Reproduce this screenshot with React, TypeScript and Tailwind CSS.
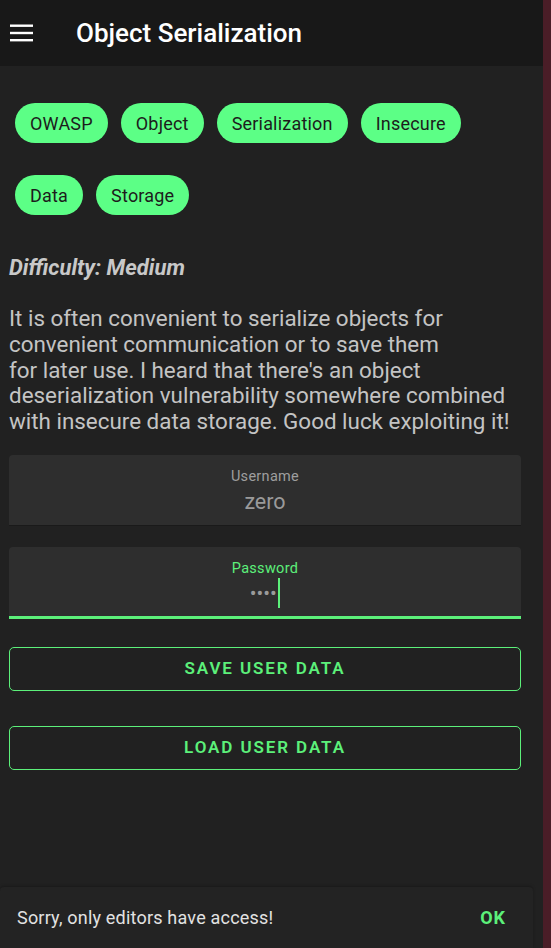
const tags = ["OWASP", "Object", "Serialization", "Insecure", "Data", "Storage"];

function MenuIcon() {
  return (
    <svg width="24" height="24" viewBox="0 0 24 24" className="fill-white">
      <rect x="0" y="3.5" width="23" height="2.4" />
      <rect x="0" y="10.8" width="23" height="2.4" />
      <rect x="0" y="18" width="23" height="2.4" />
    </svg>
  );
}

export default function App() {
  return (
    <div className="flex h-[948px] w-[551px] overflow-hidden font-['Roboto',sans-serif]">
      <div className="relative flex w-[543px] flex-col bg-[#212121]">
        <header className="flex h-[66px] shrink-0 items-center bg-[#181818] pl-[10px]">
          <MenuIcon />
          <h1 className="ml-[42px] text-[26px] font-medium text-white">Object Serialization</h1>
        </header>

        <main className="flex flex-col px-[9px]">
          <div className="mt-[37px] flex w-[512px] flex-wrap gap-x-[13px] gap-y-[32px] pl-[6px]">
            {tags.map((t) => (
              <span
                key={t}
                className="flex h-[40px] items-center rounded-full bg-[#5cff86] px-[15px] text-[18px] tracking-[0.2px] text-[#1c1c1c]"
              >
                {t}
              </span>
            ))}
          </div>

          <p className="mt-[38px] text-[22px] leading-[30px] font-bold italic text-[#c8c8c8]">Difficulty: Medium</p>

          <p className="mt-[23px] text-[22.4px] leading-[25.8px] text-[#c4c4c4]">
            It is often convenient to serialize objects for
            <br />
            convenient communication or to save them
            <br />
            for later use. I heard that there's an object
            <br />
            deserialization vulnerability somewhere combined
            <br />
            with insecure data storage. Good luck exploiting it!
          </p>

          <div className="mt-[20px] flex h-[71px] w-[512px] flex-col items-center rounded-t-[4px] border-b border-[#1a1a1a] bg-[#2e2e2e] pt-[13px]">
            <span className="text-[14.5px] leading-[18px] tracking-[0.3px] text-[#9e9e9e]">Username</span>
            <span className="mt-[2px] text-[21.5px] leading-[28px] text-[#9a9a9a]">zero</span>
          </div>

          <div className="mt-[21px] flex h-[72px] w-[512px] flex-col items-center rounded-t-[4px] border-b-[3px] border-[#5cf07a] bg-[#2e2e2e] pt-[13px]">
            <span className="text-[14.5px] leading-[18px] tracking-[0.3px] text-[#5cf07a]">Password</span>
            <span className="mt-[0px] flex h-[30px] items-center">
              <span className="text-[20px] tracking-[0px] text-[#9a9a9a]">••••</span>
              <span className="ml-[1px] h-[30px] w-[2.5px] bg-[#5cf07a]" />
            </span>
          </div>

          <button className="mt-[28px] h-[44px] w-[512px] rounded-[5px] border border-[#5cf07a] text-[17px] font-semibold tracking-[1.9px] text-[#5cf07a]">
            SAVE USER DATA
          </button>
          <button className="mt-[35px] h-[44px] w-[512px] rounded-[5px] border border-[#5cf07a] text-[17px] font-semibold tracking-[1.9px] text-[#5cf07a]">
            LOAD USER DATA
          </button>
        </main>

        <div className="absolute bottom-0 left-0 flex h-[61px] w-[533px] items-center justify-between rounded-t-[4px] bg-[#232323] pl-[17px] pr-[27px] shadow-[0_-1px_3px_rgba(0,0,0,0.25)]">
          <span className="text-[18px] tracking-[0.2px] text-[#e2e2e2]">Sorry, only editors have access!</span>
          <span className="text-[18px] font-bold tracking-[1px] text-[#5cf07a]">OK</span>
        </div>
      </div>
      <div className="w-[8px] bg-[#4a1d27]" />
    </div>
  );
}
